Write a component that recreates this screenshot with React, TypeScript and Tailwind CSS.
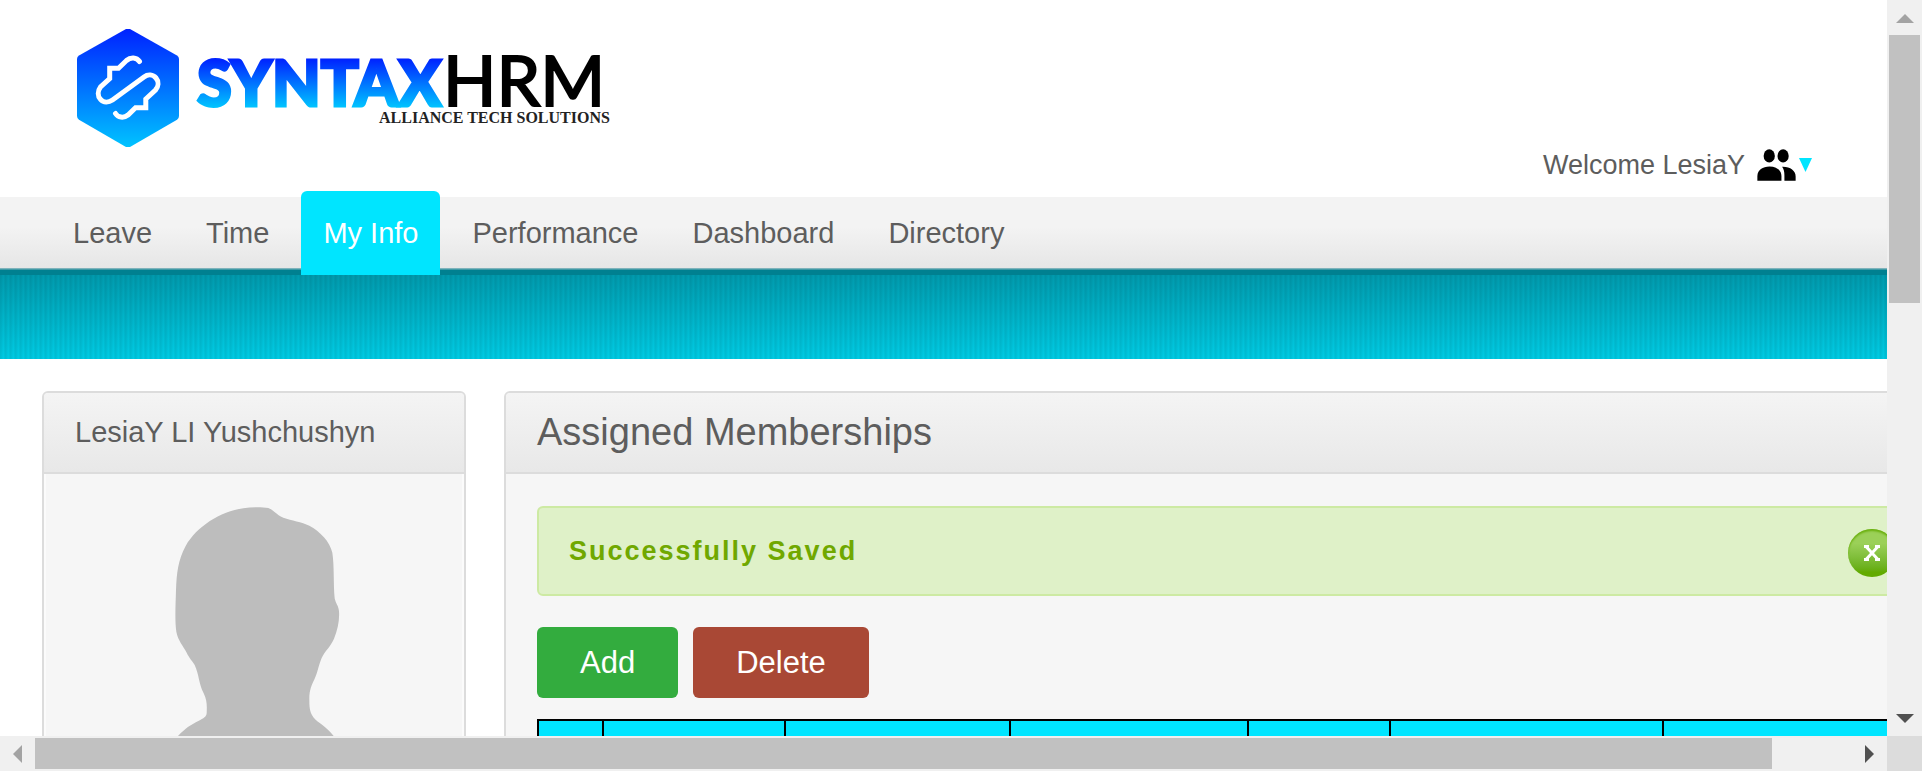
import React from "react";

const navItems = ["Leave", "Time", "My Info", "Performance", "Dashboard", "Directory"];

function Logo() {
  return (
    <svg viewBox="0 0 540 124" className="h-[124px] w-[540px]" role="img" aria-label="SyntaxHRM Alliance Tech Solutions">
      <defs>
        <linearGradient id="hex" x1="0" y1="0" x2="0" y2="1">
          <stop offset="0" stopColor="#0022ff" />
          <stop offset="1" stopColor="#00c3ff" />
        </linearGradient>
        <linearGradient id="word" gradientUnits="userSpaceOnUse" x1="0" y1="33" x2="0" y2="81">
          <stop offset="0" stopColor="#0022ff" />
          <stop offset="1" stopColor="#00c3ff" />
        </linearGradient>
      </defs>
      <path d="M50 3h4L101 29.500q2 1.200 2 3.500v57q0 2.500-2 3.700L54 121h-4L3 93.700q-2-1.200-2-3.700V33q0-2.300 2-3.500z" fill="url(#hex)" />
      <path
        d="M63.500 35.500c-3-4.500-9-4.500-13-1L42.500 42.200h-8.800v10.500L24.500 61c-3 4-3 9 0 12.300c3 3.500 8 3.500 12 .7L68 51c4-3 9-2.500 12 1c3 3.500 2.500 8.500-.5 12L69.800 73v8.800H59.500L52 89c-4.500 3.500-10 2.500-12.500-1.500"
        fill="none"
        stroke="#fff"
        strokeWidth="5"
        strokeLinecap="round"
      />
      <text x="121" y="80" fontFamily="Lato, sans-serif" fontWeight="900" fontSize="63" fill="url(#word)" stroke="url(#word)" strokeWidth="3">
        SYNTAX
      </text>
      <text x="367" y="80" fontFamily="Lato, sans-serif" fontSize="70" fill="#000" stroke="#000" strokeWidth="2">
        HRM
      </text>
      <text x="303" y="97" fontFamily="'Liberation Serif', serif" fontWeight="700" fontSize="16" fill="#222">
        ALLIANCE TECH SOLUTIONS
      </text>
    </svg>
  );
}

function PeopleIcon() {
  return (
    <svg viewBox="710 56 118 97" className="h-8 w-[39px]" aria-hidden="true">
      <ellipse cx="747" cy="77" rx="17" ry="20" />
      <ellipse cx="789" cy="77" rx="17" ry="20" />
      <path d="M711 152v-14c0-18 16-29 37-29s36 11 36 29v14z" />
      <path d="M786 110c24-1 41 12 41 29v13h-34v-16c0-11-2-19-7-26z" />
    </svg>
  );
}

function Avatar() {
  return (
    <svg viewBox="441 411 522 720" className="h-60 w-[174px]" role="img" aria-label="Employee photo">
      <path
        d="M670 415C695 411 725 411 745 414C762 420 768 434 790 443C815 452 845 455 868 467C900 484 930 515 937 548C943 585 940 640 944 685C947 700 956 708 957 724C959 750 953 780 942 806C932 830 915 842 905 864C896 885 892 910 884 926C875 945 868 960 868 985C868 1008 868 1025 880 1042C895 1060 920 1070 941 1098L975 1131H440L474 1098C495 1075 515 1063 535 1053C552 1045 559 1040 560 1030C561 1005 561 990 551 970C535 938 538 915 524 885C515 870 508 865 500 848C490 828 474 812 469 785C464 750 467 700 468 660C470 610 474 570 497 528C530 470 600 425 670 415Z"
        fill="#bdbdbd"
      />
    </svg>
  );
}

function Arrow({ points, size, color }: { points: string; size: string; color: string }) {
  return (
    <svg viewBox="0 0 18 18" className={size} aria-hidden="true">
      <polygon points={points} fill={color} />
    </svg>
  );
}

function PanelHead({ children }: { children: React.ReactNode }) {
  return (
    <div className="flex h-[81px] items-center border-b-2 border-[#dcdcdc] bg-linear-to-b from-[#f4f4f4] to-[#e8e8e8] px-[31px]">
      {children}
    </div>
  );
}

export default function App() {
  return (
    <div className="grid h-screen grid-cols-[minmax(0,1fr)_35px] grid-rows-[minmax(0,1fr)_35px] bg-white font-['Liberation_Sans',Arial,sans-serif] text-[#5d5d5d]">
      <div className="overflow-hidden">
        <header className="flex h-[197px] items-end justify-between pr-[75px] pl-[76px]">
          <a href="#home" className="mb-[47px]">
            <Logo />
          </a>
          <button type="button" className="mb-4 flex items-center">
            <span className="mr-3 text-[27px] leading-8">Welcome LesiaY</span>
            <span className="text-black">
              <PeopleIcon />
            </span>
            <svg viewBox="0 0 13 14" className="ml-[3px] h-3.5 w-[13px]" aria-hidden="true">
              <polygon points="0,0 13,0 6.500,14" fill="#00e5ff" />
            </svg>
          </button>
        </header>

        <nav className="flex h-[78px] items-end gap-2.5 bg-[linear-gradient(#f3f3f3_0,#f3f3f3_30px,#e6e6e6_71px,#7fb3bb_71px,#7fb3bb_72px,#008090_73px)] pl-[51px]">
          {navItems.map((item) => (
            <a
              key={item}
              href={"#" + item}
              className={
                item === "My Info"
                  ? "flex h-[84px] items-center rounded-t-md bg-[#00e5ff] px-[22px] pt-0.5 text-[29px] text-white"
                  : "flex h-[84px] items-center px-[22px] pt-0.5 text-[29px]"
              }
            >
              {item}
            </a>
          ))}
        </nav>
        <div className="h-[84px] bg-[repeating-linear-gradient(90deg,rgba(0,0,0,0.07)_0,rgba(0,0,0,0.04)_2px,transparent_3px,transparent_4px,rgba(0,0,0,0.07)_5px),linear-gradient(#009aad,#00cbe3)]" />

        <main className="flex w-[calc(100%+87px)] items-start gap-[38px] px-[42px] pt-8">
          <aside className="w-[424px] shrink-0 overflow-hidden rounded-md border-2 border-[#dcdcdc] bg-[#f6f6f6]">
            <PanelHead>
              <h2 className="text-[29px]">LesiaY LI Yushchushyn</h2>
            </PanelHead>
            <div className="flex justify-center border-x-2 border-[#fbfbfb] py-[33px]">
              <Avatar />
            </div>
          </aside>

          <section className="min-w-0 flex-1 overflow-hidden rounded-md border-2 border-[#dcdcdc] bg-[#f6f6f6]">
            <PanelHead>
              <h1 className="text-[38px]">Assigned Memberships</h1>
            </PanelHead>
            <div className="px-[31px] py-8">
              <div role="status" className="flex h-[90px] items-center justify-between rounded-md border-2 border-[#cdeaa3] bg-[#dff1c8] pr-px pl-[30px]">
                <span className="text-[27px] font-bold tracking-[2px] text-[#70a800]">Successfully Saved</span>
                <button
                  type="button"
                  aria-label="Close"
                  className="mt-1 flex size-12 items-center justify-center rounded-full bg-linear-to-b from-[#9bd058] from-30% to-[#62ab00] to-90% shadow-[inset_0_2px_2px_#6bb010]"
                >
                  <svg viewBox="0 0 18 16" className="h-4 w-[18px]" aria-hidden="true">
                    <path d="M3 1.500l12 13M15 1.500l-12 13M1 1.500h5M12 1.500h5M1 14.500h5M12 14.500h5" stroke="#fff" strokeWidth="3" />
                  </svg>
                </button>
              </div>
              <div className="mt-[31px] flex gap-[15px]">
                <button type="button" className="h-[71px] rounded-md bg-[#33ac3e] px-[43px] pt-0.5 text-[31px] text-white">
                  Add
                </button>
                <button type="button" className="h-[71px] rounded-md bg-[#a94835] px-[43px] pt-0.5 text-[31px] text-white">
                  Delete
                </button>
              </div>
              <table className="mt-[21px] w-full table-fixed border-collapse bg-[#00e5ff]">
                <colgroup>
                  <col className="w-[65px]" />
                  <col className="w-[182px]" />
                  <col className="w-[225px]" />
                  <col className="w-[238px]" />
                  <col className="w-[142px]" />
                  <col className="w-[273px]" />
                  <col />
                </colgroup>
                <thead>
                  <tr className="h-24">
                    {[0, 1, 2, 3, 4, 5, 6].map((n) => (
                      <th key={n} scope="col" className="border-2 border-black" />
                    ))}
                  </tr>
                </thead>
              </table>
            </div>
          </section>
        </main>
      </div>

      <div className="flex flex-col bg-[#f0f0f0]">
        <button type="button" aria-label="Scroll up" className="flex h-[35px] items-center justify-center pt-0.5">
          <Arrow points="0,13 9,4 18,13" size="size-[18px]" color="#a3a3a3" />
        </button>
        <div className="flex-1 px-0.5">
          <div className="h-[40.2%] bg-[#c1c1c1]" />
        </div>
        <button type="button" aria-label="Scroll down" className="flex h-[35px] items-center justify-center">
          <Arrow points="0,4 18,4 9,13" size="size-[18px]" color="#505050" />
        </button>
      </div>
      <div className="flex bg-[#f0f0f0]">
        <button type="button" aria-label="Scroll left" className="flex w-[35px] items-center justify-center">
          <Arrow points="13,0 4,9 13,18" size="size-[18px]" color="#a3a3a3" />
        </button>
        <div className="flex flex-1 py-0.5">
          <div className="w-[95.6%] bg-[#c1c1c1]" />
        </div>
        <button type="button" aria-label="Scroll right" className="flex w-[35px] items-center justify-center">
          <Arrow points="4,0 13,9 4,18" size="size-[18px]" color="#505050" />
        </button>
      </div>
      <div className="bg-[#dcdcdc]" />
    </div>
  );
}
